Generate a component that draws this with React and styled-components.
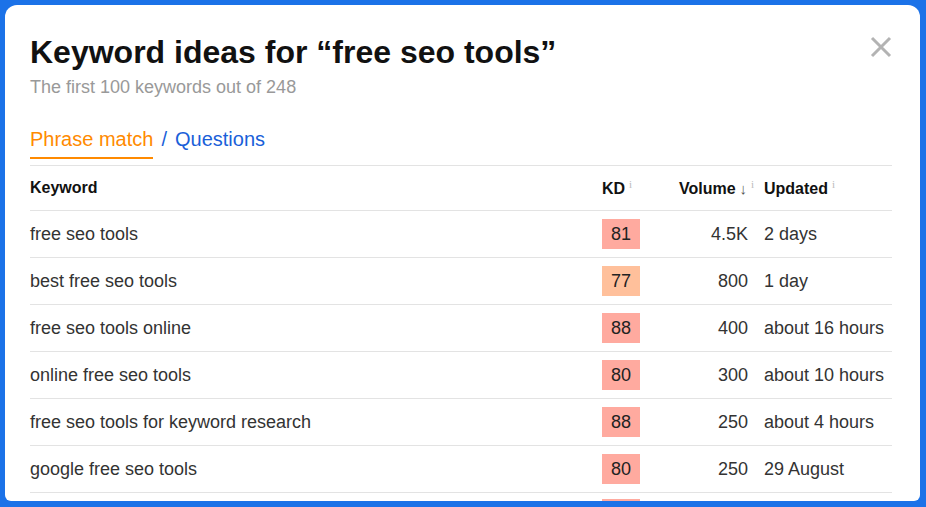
import React from "react";
import styled, { createGlobalStyle } from "styled-components";

const GlobalStyle = createGlobalStyle`
  html, body {
    margin: 0;
    padding: 0;
    background: #1b72e8;
  }
  body {
    font-family: "Liberation Sans", Arial, sans-serif;
  }
`;

const Frame = styled.div`
  height: 507px;
  box-sizing: border-box;
  padding: 5px 6px 6px 5px;
`;

const Card = styled.div`
  height: 100%;
  box-sizing: border-box;
  background: #fff;
  border-radius: 12px 12px 6px 6px;
  padding: 28px 28px 0 25px;
  overflow: hidden;
`;

const Head = styled.div`
  display: flex;
  justify-content: space-between;
  align-items: flex-start;
`;

const Title = styled.h1`
  margin: 0;
  font-size: 32px;
  line-height: 38px;
  font-weight: 700;
  color: #111;
`;

const Sub = styled.div`
  margin-top: 5px;
  font-size: 18px;
  line-height: 22px;
  color: #999;
`;

const Close = styled.button`
  border: none;
  background: none;
  padding: 0;
  margin: 3px 0 0 0;
  width: 22px;
  height: 22px;
  cursor: pointer;
`;

const Tabs = styled.div`
  display: flex;
  align-items: flex-start;
  margin-top: 29px;
  font-size: 20px;
  line-height: 24px;
`;

const Tab = styled.span`
  color: ${(props) => (props.active ? "#ff8a00" : "#1a5fd9")};
  padding-bottom: 6px;
  border-bottom: 2px solid ${(props) => (props.active ? "#ff8a00" : "transparent")};
`;

const Slash = styled.span`
  color: #1a5fd9;
  margin: 0 8px;
`;

const Table = styled.div`
  margin-top: 6px;
  border-top: 1px solid #e3e3e3;
`;

const Row = styled.div`
  display: grid;
  grid-template-columns: 572px 77px 85px 128px;
  align-items: center;
  height: ${(props) => (props.head ? "44px" : "46px")};
  border-bottom: 1px solid #e3e3e3;
  font-size: ${(props) => (props.head ? "16px" : "18px")};
  font-weight: ${(props) => (props.head ? 700 : 400)};
  color: ${(props) => (props.head ? "#111" : "#333")};
  white-space: nowrap;
`;

const Cell = styled.div`
  text-align: ${(props) => (props.right ? "right" : "left")};
  padding-right: ${(props) => (props.right ? "16px" : "0")};
`;

const Info = styled.sup`
  font-family: "Liberation Serif", serif;
  font-weight: 400;
  font-size: 11px;
  color: #bbb;
  margin-left: 4px;
  vertical-align: 6px;
`;

const Arrow = styled.span`
  font-weight: 400;
  color: #555;
  font-size: 15px;
  margin-left: 4px;
`;

const Badge = styled.span`
  display: inline-block;
  width: 38px;
  height: 30px;
  line-height: 30px;
  text-align: center;
  color: #222;
  background: ${(props) => props.color};
`;

const rows = [
  { kw: "free seo tools", kd: 81, vol: "4.5K", up: "2 days" },
  { kw: "best free seo tools", kd: 77, vol: "800", up: "1 day" },
  { kw: "free seo tools online", kd: 88, vol: "400", up: "about 16 hours" },
  { kw: "online free seo tools", kd: 80, vol: "300", up: "about 10 hours" },
  { kw: "free seo tools for keyword research", kd: 88, vol: "250", up: "about 4 hours" },
  { kw: "google free seo tools", kd: 80, vol: "250", up: "29 August" },
];

const kdColor = (kd) => (kd < 78 ? "#ffc09b" : "#ffaa9f");

const App = () => {
  return (
    <Frame>
      <GlobalStyle />
      <Card>
        <Head>
          <div>
            <Title>Keyword ideas for “free seo tools”</Title>
            <Sub>The first 100 keywords out of 248</Sub>
          </div>
          <Close aria-label="Close">
            <svg width="22" height="22" viewBox="0 0 22 22">
              <path d="M2 2 L20 20 M20 2 L2 20" stroke="#b3b3b3" strokeWidth="3" />
            </svg>
          </Close>
        </Head>
        <Tabs>
          <Tab active>Phrase match</Tab>
          <Slash>/</Slash>
          <Tab>Questions</Tab>
        </Tabs>
        <Table>
          <Row head>
            <Cell>Keyword</Cell>
            <Cell>
              KD<Info>i</Info>
            </Cell>
            <Cell>
              Volume<Arrow>↓</Arrow>
              <Info>i</Info>
            </Cell>
            <Cell>
              Updated<Info>i</Info>
            </Cell>
          </Row>
          {rows.map((r) => (
            <Row key={r.kw}>
              <Cell>{r.kw}</Cell>
              <Cell>
                <Badge color={kdColor(r.kd)}>{r.kd}</Badge>
              </Cell>
              <Cell right>{r.vol}</Cell>
              <Cell>{r.up}</Cell>
            </Row>
          ))}
          {/* next row is hidden below the card edge, only its badge top peeks out */}
          <Row>
            <Cell />
            <Cell>
              <Badge color="#ffaa9f" />
            </Cell>
          </Row>
        </Table>
      </Card>
    </Frame>
  );
};

export default App;
